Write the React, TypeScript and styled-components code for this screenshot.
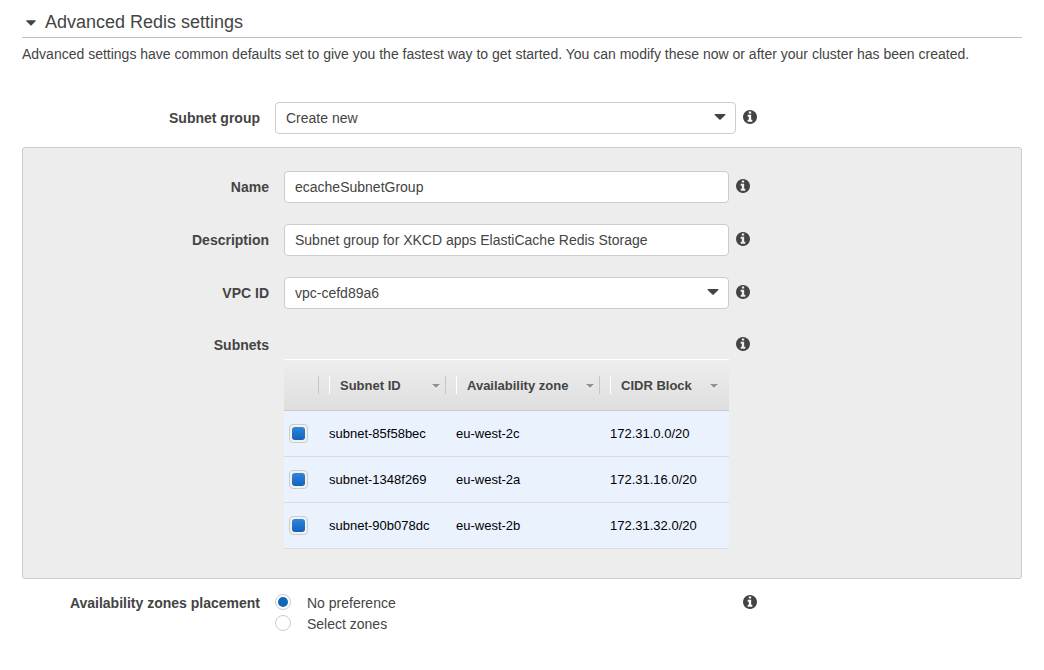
import React, { useState } from "react";
import styled, { createGlobalStyle } from "styled-components";

const GlobalStyle = createGlobalStyle`
  *, *::before, *::after { box-sizing: border-box; }
  body {
    margin: 0;
    background: #fff;
    color: #444;
    font: 14px/20px "Liberation Sans", Arial, sans-serif;
  }
  input, select, button { font: inherit; color: inherit; margin: 0; }
`;

const Page = styled.main`
  padding: 8px 22px 32px;
`;

const SectionTitle = styled.h2`
  margin: 0;
  border-bottom: 1px solid #c0c0c0;
  font-size: 18px;
  font-weight: 400;
  line-height: 29px;
`;

const SectionToggle = styled.button`
  display: flex;
  align-items: center;
  gap: 9px;
  width: 100%;
  padding: 0 4px;
  border: 0;
  background: none;
  text-align: left;
  cursor: pointer;
`;

const Intro = styled.p`
  margin: 6px 0 38px;
`;

const Form = styled.form`
  display: flex;
  flex-direction: column;
  gap: 13px;
`;

const Row = styled.div<{ $nested?: boolean; $top?: boolean }>`
  display: grid;
  grid-template-columns: ${(p) => (p.$nested ? "261fr 445fr 292fr" : "253fr 461fr 286fr")};
  align-items: ${(p) => (p.$top ? "start" : "center")};
`;

const Label = styled.label`
  padding-right: 15px;
  font-weight: 700;
  text-align: right;
`;

const Heading = styled.div<{ $height: number }>`
  padding-right: 15px;
  font-weight: 700;
  line-height: ${(p) => p.$height}px;
  text-align: right;
`;

const InfoButton = styled.button`
  display: block;
  margin-left: 7px;
  padding: 0;
  border: 0;
  background: none;
  cursor: pointer;
`;

const InfoCell = styled.div<{ $height?: number }>`
  display: flex;
  align-items: center;
  height: ${(p) => p.$height ?? 30}px;
  padding-bottom: 2px;
`;

const TextInput = styled.input`
  width: 100%;
  height: 32px;
  padding: 0 10px;
  border: 1px solid #ccc;
  border-radius: 4px;
  background: #fff;
`;

const SelectBox = styled.div`
  position: relative;
  svg {
    position: absolute;
    top: 12px;
    right: 10px;
    pointer-events: none;
  }
`;

const Select = styled.select`
  display: block;
  width: 100%;
  height: 32px;
  padding: 0 32px 0 10px;
  border: 1px solid #ccc;
  border-radius: 4px;
  background: #fff;
  appearance: none;
`;

const Panel = styled.section`
  display: flex;
  flex-direction: column;
  gap: 21px;
  padding: 23px 0 29px;
  border: 1px solid #ccc;
  border-radius: 3px;
  background: #ededed;
`;

const Table = styled.table`
  width: 100%;
  margin-top: 29px;
  border-spacing: 0;
  table-layout: fixed;
  font-size: 13px;
`;

const Col = styled.col<{ $width?: number }>`
  width: ${(p) => (p.$width ? `${p.$width}px` : "auto")};
`;

const HeadRow = styled.tr`
  background: linear-gradient(#eee, #dedede);
`;

const Th = styled.th`
  height: 52px;
  padding: 0 5px;
  border-top: 1px solid #fff;
  border-bottom: 1px solid #c9c9c9;
`;

const HeadCell = styled.div<{ $first?: boolean; $last?: boolean }>`
  display: flex;
  align-items: center;
  justify-content: space-between;
  height: 18px;
  padding: 2px 5px 0 10px;
  border-left: 1px solid ${(p) => (p.$first ? "transparent" : "#fff")};
  border-right: 1px solid ${(p) => (p.$last ? "transparent" : "#c6c6c6")};
  white-space: nowrap;
`;

const Td = styled.td`
  height: 46px;
  padding: 0 5px;
  border-bottom: 1px solid #dcdcdc;
  background: #eaf2fe;
  color: #000;
`;

const CheckBox = styled.input`
  display: grid;
  place-items: center;
  width: 19px;
  height: 19px;
  border: 1px solid #ccc;
  border-radius: 4px;
  background: #f1f1f1;
  appearance: none;
  &:checked::before {
    content: "";
    width: 13px;
    height: 13px;
    border-radius: 3px;
    background: linear-gradient(#2f86dc, #1262ba);
  }
`;

const Radios = styled.div`
  display: flex;
  flex-direction: column;
`;

const RadioLabel = styled.label`
  display: flex;
  align-items: flex-start;
  gap: 16px;
  height: 21px;
  line-height: 22px;
`;

const Radio = styled.input`
  && {
    margin-top: 2px;
  }
  display: grid;
  place-items: center;
  width: 16px;
  height: 16px;
  border: 1px solid #ccc;
  border-radius: 50%;
  background: #fff;
  appearance: none;
  &:checked::before {
    content: "";
    width: 10px;
    height: 10px;
    border-radius: 50%;
    background: #1166bb;
  }
`;

const Caret = () => (
  <svg width="12" height="6" viewBox="0 0 12 6" aria-hidden="true">
    <path d="M1 0h10q.8.2.3.9L6.7 5.5q-.7.6-1.4 0L.7.9Q.2.2 1 0z" fill="#444" />
  </svg>
);

const TitleCaret = ({ open }: { open: boolean }) => (
  <svg width="10" height="6" viewBox="0 0 10 6" aria-hidden="true" transform={open ? undefined : "rotate(-90)"}>
    <path d="M.8.3h8.4q.8.2.3.9L5.6 5.2q-.6.5-1.2 0L.5 1.2Q0 .5.8.3z" fill="#444" />
  </svg>
);

const SortCaret = () => (
  <svg width="8" height="5" viewBox="0 0 8 5" aria-hidden="true">
    <path d="M0 1l4 4 4-4z" fill="#fff" />
    <path d="M0 0h8L4 4z" fill="#919191" />
  </svg>
);

const Info = ({ about, height }: { about: string; height?: number }) => (
  <InfoCell $height={height}>
    <InfoButton type="button" aria-label={`About ${about}`}>
      <svg width="14" height="14" viewBox="128 128 1536 1536" display="block" aria-hidden="true">
        <path
          fill="#444"
          d="M1152 1376v-160q0-14-9-23t-23-9h-96v-512q0-14-9-23t-23-9h-320q-14 0-23 9t-9 23v160q0 14 9 23t23 9h96v320h-96q-14 0-23 9t-9 23v160q0 14 9 23t23 9h448q14 0 23-9t9-23zm-128-896v-160q0-14-9-23t-23-9h-192q-14 0-23 9t-9 23v160q0 14 9 23t23 9h192q14 0 23-9t9-23zm640 416q0 209-103 385.5t-279.5 279.5-385.5 103-385.5-103-279.5-279.5-103-385.5 103-385.5 279.5-279.5 385.5-103 385.5 103 279.5 279.5 103 385.5z"
        />
      </svg>
    </InfoButton>
  </InfoCell>
);

const subnets = [
  { id: "subnet-85f58bec", zone: "eu-west-2c", cidr: "172.31.0.0/20" },
  { id: "subnet-1348f269", zone: "eu-west-2a", cidr: "172.31.16.0/20" },
  { id: "subnet-90b078dc", zone: "eu-west-2b", cidr: "172.31.32.0/20" },
];

const columns = ["Subnet ID", "Availability zone", "CIDR Block"];

export default function App() {
  const [open, setOpen] = useState(true);
  return (
    <>
      <GlobalStyle />
      <Page>
        <SectionTitle>
          <SectionToggle type="button" aria-expanded={open} onClick={() => setOpen(!open)}>
            <TitleCaret open={open} />
            Advanced Redis settings
          </SectionToggle>
        </SectionTitle>
        {open && (
          <>
            <Intro>
              Advanced settings have common defaults set to give you the fastest way to get started. You can modify
              these now or after your cluster has been created.
            </Intro>
            <Form>
              <Row>
                <Label htmlFor="subnet-group">Subnet group</Label>
                <SelectBox>
                  <Select id="subnet-group">
                    <option>Create new</option>
                  </Select>
                  <Caret />
                </SelectBox>
                <Info about="Subnet group" />
              </Row>
              <Panel>
                <Row $nested>
                  <Label htmlFor="name">Name</Label>
                  <TextInput id="name" type="text" defaultValue="ecacheSubnetGroup" />
                  <Info about="Name" />
                </Row>
                <Row $nested>
                  <Label htmlFor="description">Description</Label>
                  <TextInput
                    id="description"
                    type="text"
                    defaultValue="Subnet group for XKCD apps ElastiCache Redis Storage"
                  />
                  <Info about="Description" />
                </Row>
                <Row $nested>
                  <Label htmlFor="vpc">VPC ID</Label>
                  <SelectBox>
                    <Select id="vpc">
                      <option>vpc-cefd89a6</option>
                    </Select>
                    <Caret />
                  </SelectBox>
                  <Info about="VPC ID" />
                </Row>
                <Row $nested $top>
                  <Heading $height={30} id="subnets-label">
                    Subnets
                  </Heading>
                  <Table aria-labelledby="subnets-label">
                    <colgroup>
                      <Col $width={40} />
                      <Col $width={127} />
                      <Col $width={154} />
                      <Col />
                    </colgroup>
                    <thead>
                      <HeadRow>
                        <Th aria-label="Selected">
                          <HeadCell $first />
                        </Th>
                        {columns.map((name, i) => (
                          <Th key={name} scope="col">
                            <HeadCell $last={i === columns.length - 1}>
                              {name}
                              <SortCaret />
                            </HeadCell>
                          </Th>
                        ))}
                      </HeadRow>
                    </thead>
                    <tbody>
                      {subnets.map((s) => (
                        <tr key={s.id}>
                          <Td>
                            <CheckBox type="checkbox" defaultChecked aria-label={s.id} />
                          </Td>
                          <Td>{s.id}</Td>
                          <Td>{s.zone}</Td>
                          <Td>{s.cidr}</Td>
                        </tr>
                      ))}
                    </tbody>
                  </Table>
                  <Info about="Subnets" height={30} />
                </Row>
              </Panel>
              <Row $top role="radiogroup" aria-labelledby="placement-label">
                <Heading $height={22} id="placement-label">
                  Availability zones placement
                </Heading>
                <Radios>
                  <RadioLabel>
                    <Radio type="radio" name="placement" defaultChecked />
                    No preference
                  </RadioLabel>
                  <RadioLabel>
                    <Radio type="radio" name="placement" />
                    Select zones
                  </RadioLabel>
                </Radios>
                <Info about="Availability zones placement" height={22} />
              </Row>
            </Form>
          </>
        )}
      </Page>
    </>
  );
}
